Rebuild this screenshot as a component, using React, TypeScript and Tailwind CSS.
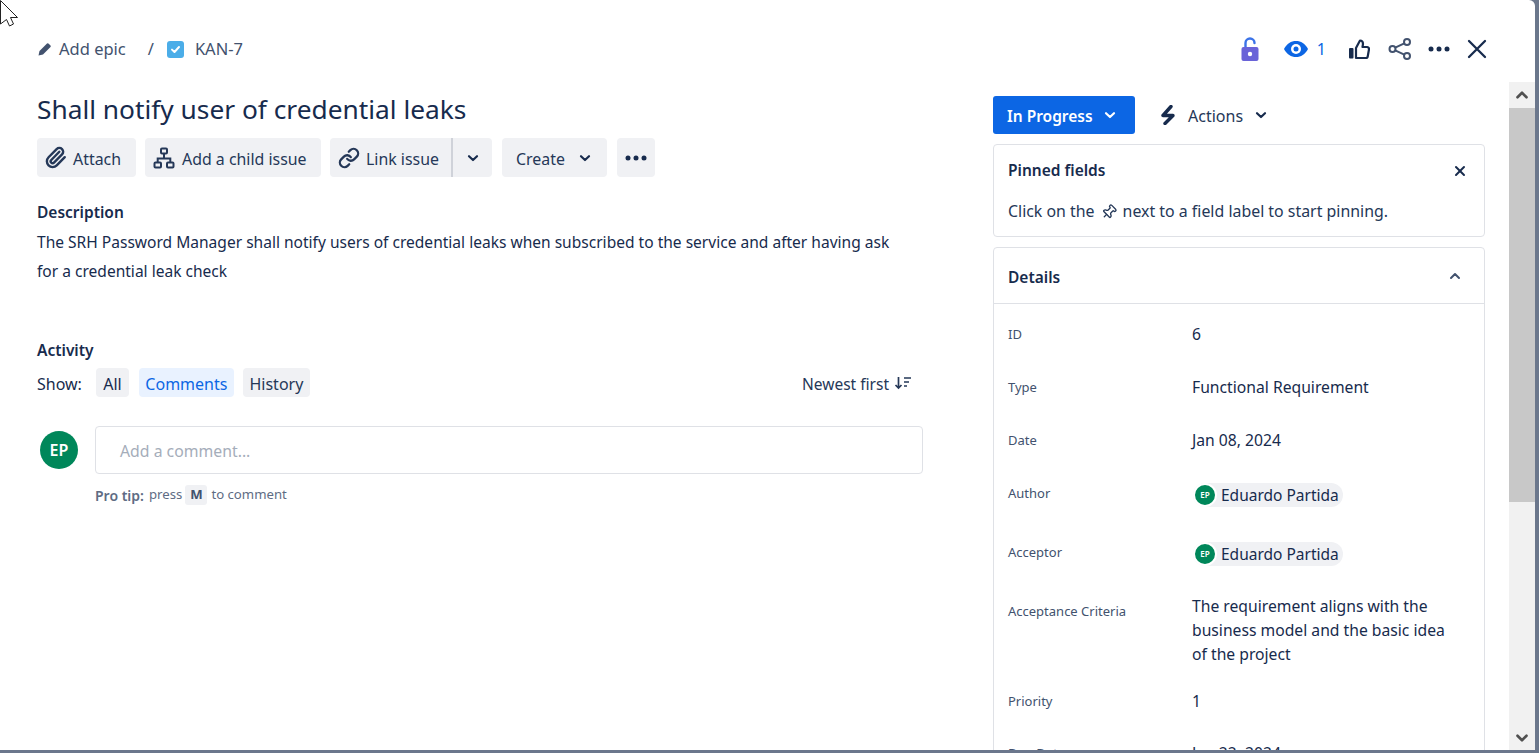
import { ChevronDown, ChevronUp, Link, Paperclip, Pin, X } from 'lucide-react';
import type { ReactNode } from 'react';

const Chevron = ({ className = 'text-[#172b4d]' }: { className?: string }) => (
    <svg width="12" height="12" viewBox="0 0 12 12" className={className}>
        <path d="M2 4.2 6 8l4-3.8" fill="none" stroke="currentColor" strokeWidth="2.2" strokeLinecap="round" strokeLinejoin="round" />
    </svg>
);

const Dots = ({ size = 5 }: { size?: number }) => (
    <svg width="24" height="8" viewBox="0 0 24 8" className="text-[#172b4d]">
        <circle cx="4" cy="4" r={size / 2} fill="currentColor" />
        <circle cx="12" cy="4" r={size / 2} fill="currentColor" />
        <circle cx="20" cy="4" r={size / 2} fill="currentColor" />
    </svg>
);

const ToolButton = ({ children, className = '' }: { children: ReactNode; className?: string }) => (
    <div className={`h-[39px] flex items-center bg-[#f0f1f4] rounded-[4px] text-[#253858] ${className}`}>{children}</div>
);

const Avatar = () => (
    <span className="w-[20px] h-[20px] rounded-full bg-[#00875a] border-2 border-white box-content flex items-center justify-center text-white text-[8px] font-semibold">EP</span>
);

const UserChip = () => (
    <div className="flex w-fit items-center h-[24px] bg-[#f0f1f4] rounded-full pr-[4px] ml-[1px] mt-[2px]">
        <Avatar />
        <span className="ml-[4px] text-[15.5px] text-[#172b4d]">Eduardo Partida</span>
    </div>
);

const Row = ({ label, children, className = '' }: { label: string; children: ReactNode; className?: string }) => (
    <div className={`flex ${className}`}>
        <div className="w-[184px] shrink-0 text-[13px] text-[#42526e] leading-[24px]">{label}</div>
        <div className="flex-1 text-[15.7px] leading-[24px] text-[#172b4d]">{children}</div>
    </div>
);

export default function App() {
    return (
        <div className="w-[1539px] h-[753px] overflow-hidden bg-[#6b778c] relative font-['Noto_Sans',sans-serif]">
            <div className="w-[1535px] h-[750px] bg-white rounded-tr-[6px] flex flex-col">
                <header className="h-[82px] shrink-0 flex pl-[37px] pr-[48px]">
                    <div className="flex items-center h-[98px] text-[16.5px] text-[#42526e]">
                        <svg width="16" height="16" viewBox="0 0 16 16" className="text-[#42526e]">
                            <path d="M1.500 14.500l1-4.500L10 2.500a1 1 0 0 1 1.400 0l2.100 2.100a1 1 0 0 1 0 1.400L6 13.500z" fill="currentColor" />
                        </svg>
                        <span className="ml-[6px]">Add epic</span>
                        <span className="ml-[22px]">/</span>
                        <span className="ml-[13px] w-[17px] h-[17px] rounded-[3px] bg-[#4bade8] flex items-center justify-center">
                            <svg width="11" height="11" viewBox="0 0 11 11">
                                <path d="M2 5.600 4.500 8 9 3" fill="none" stroke="white" strokeWidth="2" strokeLinecap="round" strokeLinejoin="round" />
                            </svg>
                        </span>
                        <span className="ml-[11px]">KAN-7</span>
                    </div>
                    <div className="ml-auto flex items-center h-[98px]">
                        <svg width="20" height="26" viewBox="0 0 20 26">
                            <path d="M5.500 12V7a4.500 4.500 0 0 1 9 0" fill="none" stroke="#3b73e8" strokeWidth="2.400" strokeLinecap="round" />
                            <rect x="1.500" y="11" width="17" height="14" rx="2" fill="#6a63d8" />
                            <circle cx="10" cy="18" r="2.200" fill="white" />
                        </svg>
                        <svg width="26" height="20" viewBox="0 0 26 20" className="ml-[23px]">
                            <path d="M1 10C4 4.500 8 2 13 2s9 2.500 12 8c-3 5.500-7 8-12 8S4 15.500 1 10z" fill="#0c66e4" />
                            <circle cx="13" cy="10" r="5" fill="white" />
                            <circle cx="13" cy="10" r="2.500" fill="#0c66e4" />
                        </svg>
                        <span className="ml-[8px] text-[16px] text-[#0c66e4]">1</span>
                        <svg width="22" height="22" viewBox="0 0 22 22" className="ml-[22px] text-[#172b4d]">
                            <rect x="1" y="10" width="4.500" height="10.500" rx="1" fill="currentColor" />
                            <path d="M8 10 12 2.500c2 0 3 1.500 3 3.500l-.5 3H19a2 2 0 0 1 2 2.300L19.800 18a2 2 0 0 1-2 2H8z" fill="none" stroke="currentColor" strokeWidth="2.200" strokeLinejoin="round" />
                        </svg>
                        <svg width="24" height="24" viewBox="0 0 24 24" className="ml-[18px] text-[#42526e]">
                            <g fill="none" stroke="currentColor" strokeWidth="2">
                                <circle cx="19" cy="5" r="3" />
                                <circle cx="4.500" cy="12" r="3" />
                                <circle cx="19" cy="19" r="3" />
                                <path d="M7.200 10.600 16.300 6.300M7.200 13.400l9.100 4.300" />
                            </g>
                        </svg>
                        <span className="ml-[15px]"><Dots /></span>
                        <svg width="20" height="20" viewBox="0 0 20 20" className="ml-[16px] text-[#172b4d]">
                            <path d="M2 2 18 18M18 2 2 18" fill="none" stroke="currentColor" strokeWidth="2.300" strokeLinecap="round" />
                        </svg>
                    </div>
                </header>

                <div className="flex-1 flex min-h-0">
                    <main className="w-[993px] shrink-0 pl-[37px] text-[#172b4d]">
                        <h1 className="text-[26.3px] leading-[38px] text-[#172b4d] mt-[8px]">Shall notify user of credential leaks</h1>
                        <div className="flex mt-[10px] text-[15.9px]">
                            <ToolButton className="w-[99px] pl-[7px]">
                                <Paperclip size={23} strokeWidth={2.500} className="text-[#253858]" />
                                <span className="ml-[6px] mt-[4px]">Attach</span>
                            </ToolButton>
                            <ToolButton className="w-[176px] ml-[9px] pl-[8px]">
                                <svg width="22" height="22" viewBox="0 0 22 22" fill="none" stroke="#253858" strokeWidth="2">
                                    <rect x="8" y="1.500" width="6" height="5" rx="1" />
                                    <rect x="1.500" y="15.500" width="6.500" height="5" rx="1" />
                                    <rect x="14" y="15.500" width="6.500" height="5" rx="1" />
                                    <path d="M11 7v4.500M4.700 15v-3.500h12.600V15" />
                                </svg>
                                <span className="ml-[7px] mt-[4px]">Add a child issue</span>
                            </ToolButton>
                            <ToolButton className="w-[123px] ml-[9px] pl-[8px] rounded-r-none border-r-2 border-[#cfd2d9]">
                                <Link size={22} strokeWidth={2.500} />
                                <span className="ml-[6px] mt-[4px]">Link issue</span>
                            </ToolButton>
                            <ToolButton className="w-[39px] justify-center rounded-l-none">
                                <Chevron />
                            </ToolButton>
                            <ToolButton className="w-[105px] ml-[10px] pl-[14px]">
                                <span className="mt-[4px]">Create</span>
                                <span className="ml-[14px]"><Chevron /></span>
                            </ToolButton>
                            <ToolButton className="w-[38px] ml-[10px] justify-center">
                                <Dots />
                            </ToolButton>
                        </div>

                        <h2 className="mt-[23px] text-[15.500px] leading-[24px] font-semibold">Description</h2>
                        <p className="w-[860px] text-[15.550px] leading-[29px] mt-[4px]">
                            The SRH Password Manager shall notify users of credential leaks when subscribed to the service and after having ask for a credential leak check
                        </p>

                        <h2 className="mt-[52px] text-[15.500px] leading-[24px] font-semibold">Activity</h2>
                        <div className="flex items-center w-[875px] mt-[6px] text-[16px]">
                            <span className="pt-[2px]">Show:</span>
                            <span className="ml-[14px] w-[33px] h-[29px] pt-[2px] flex items-center justify-center rounded-[4px] bg-[#f0f1f4]">All</span>
                            <span className="ml-[10px] w-[95px] h-[29px] pt-[2px] flex items-center justify-center rounded-[4px] bg-[#e9f2ff] text-[#0c66e4]">Comments</span>
                            <span className="ml-[9px] w-[67px] h-[29px] pt-[2px] flex items-center justify-center rounded-[4px] bg-[#f0f1f4] text-[#253858]">History</span>
                            <span className="ml-auto mt-[4px] text-[15.500px] text-[#253858]">Newest first</span>
                            <svg width="18" height="16" viewBox="0 0 18 16" className="ml-[5px] mt-[1px]" fill="none" stroke="#253858" strokeWidth="1.700">
                                <path d="M4.500 2v11M1.500 10l3 3 3-3M10 3h7M10 7h5M10 11h3" />
                            </svg>
                        </div>

                        <div className="flex mt-[29px] ml-[3px]">
                            <span className="w-[38px] h-[38px] mt-[5px] rounded-full bg-[#00875a] text-white flex items-center justify-center text-[16px] font-semibold">EP</span>
                            <div className="ml-[17px]">
                                <div className="w-[828px] h-[48px] border border-[#dfe1e6] rounded-[4px] pl-[24px] pt-[4px] flex items-center text-[15.800px] text-[#a5adba]">Add a comment...</div>
                                <div className="flex items-center mt-[10px] h-[22px] text-[13.200px] text-[#5e6c84]">
                                    <span className="w-[50px] text-[14px] font-semibold whitespace-nowrap">Pro tip:</span>
                                    <span className="ml-[4px]">press</span>
                                    <span className="ml-[3px] w-[22px] h-[20px] bg-[#f0f1f4] rounded-[3px] flex items-center justify-center font-bold text-[#42526e]">M</span>
                                    <span className="ml-[4px]">to comment</span>
                                </div>
                            </div>
                        </div>
                    </main>

                    <aside className="w-[492px] shrink-0 pt-[13px] overflow-hidden text-[#172b4d]">
                        <div className="flex items-center h-[40px]">
                            <div className="w-[142px] h-[38px] rounded-[3px] bg-[#0c66e4] text-white flex items-center pl-[14px] text-[15.500px] font-semibold">
                                <span className="mt-[4px]">In Progress</span>
                                <span className="ml-[11px]"><Chevron className="text-white" /></span>
                            </div>
                            <svg width="16" height="20" viewBox="0 0 16 20" className="ml-[25px] text-[#172b4d]">
                                <path d="M11 1.500 3 10.500h10L5 18.500" fill="none" stroke="currentColor" strokeWidth="3.400" strokeLinejoin="round" strokeLinecap="round" />
                            </svg>
                            <span className="ml-[12px] mt-[2px] text-[16px] text-[#253858]">Actions</span>
                            <span className="ml-[12px]"><Chevron /></span>
                        </div>
                        <section className="mt-[9px] h-[93px] border border-[#dfe1e6] rounded-[4px] px-[14px]">
                            <div className="flex items-center justify-between h-[52px]">
                                <span className="text-[15.500px] font-semibold">Pinned fields</span>
                                <X size={16} strokeWidth={3} className="text-[#172b4d] mr-[2px]" />
                            </div>
                            <div className="flex items-center mt-[3px] text-[15.900px] text-[#253858]">
                                <span>Click on the</span>
                                <Pin size={16} strokeWidth={2} className="mx-[6px] rotate-45" />
                                <span>next to a field label to start pinning.</span>
                            </div>
                        </section>
                        <section className="mt-[10px] border border-[#dfe1e6] rounded-[4px]">
                            <div className="flex items-center justify-between h-[56px] px-[14px] border-b border-[#dfe1e6]">
                                <span className="mt-[4px] text-[15.500px] font-semibold">Details</span>
                                <ChevronUp size={16} strokeWidth={3} className="text-[#42526e] mr-[7px]" />
                            </div>
                            <div className="px-[14px] pt-[18px] flex flex-col">
                                <Row label="ID">6</Row>
                                <Row label="Type" className="mt-[29px]">Functional Requirement</Row>
                                <Row label="Date" className="mt-[29px]">Jan 08, 2024</Row>
                                <Row label="Author" className="mt-[29px]"><UserChip /></Row>
                                <Row label="Acceptor" className="mt-[33px]"><UserChip /></Row>
                                <Row label="Acceptance Criteria" className="mt-[33px]">
                                    <span className="block w-[265px] -mt-[5px]">The requirement aligns with the business model and the basic idea of the project</span>
                                </Row>
                                <Row label="Priority" className="mt-[23px]">1</Row>
                                <Row label="Due Date" className="mt-[28px]">Jan 22, 2024</Row>
                            </div>
                        </section>
                    </aside>

                    <div className="w-[26px] ml-[24px] shrink-0 bg-[#f1f1f1] flex flex-col">
                        <div className="h-[26px] flex items-center justify-center">
                            <ChevronUp size={18} strokeWidth={3.500} className="text-[#505050]" />
                        </div>
                        <div className="h-[394px] bg-[#c8c8c8]" />
                        <div className="mt-auto h-[24px] flex items-center justify-center">
                            <ChevronDown size={18} strokeWidth={3.500} className="text-[#505050]" />
                        </div>
                    </div>
                </div>
            </div>

            {/* screen capture pointer */}
            <svg width="20" height="28" viewBox="0 0 20 28" className="absolute top-0 left-0">
                <path d="M0.500 0.500 17.500 17.500H10.500L13.500 24 9.500 26 6.500 19.500 0.500 24z" fill="white" stroke="#222" strokeWidth="1" />
            </svg>
        </div>
    );
}
